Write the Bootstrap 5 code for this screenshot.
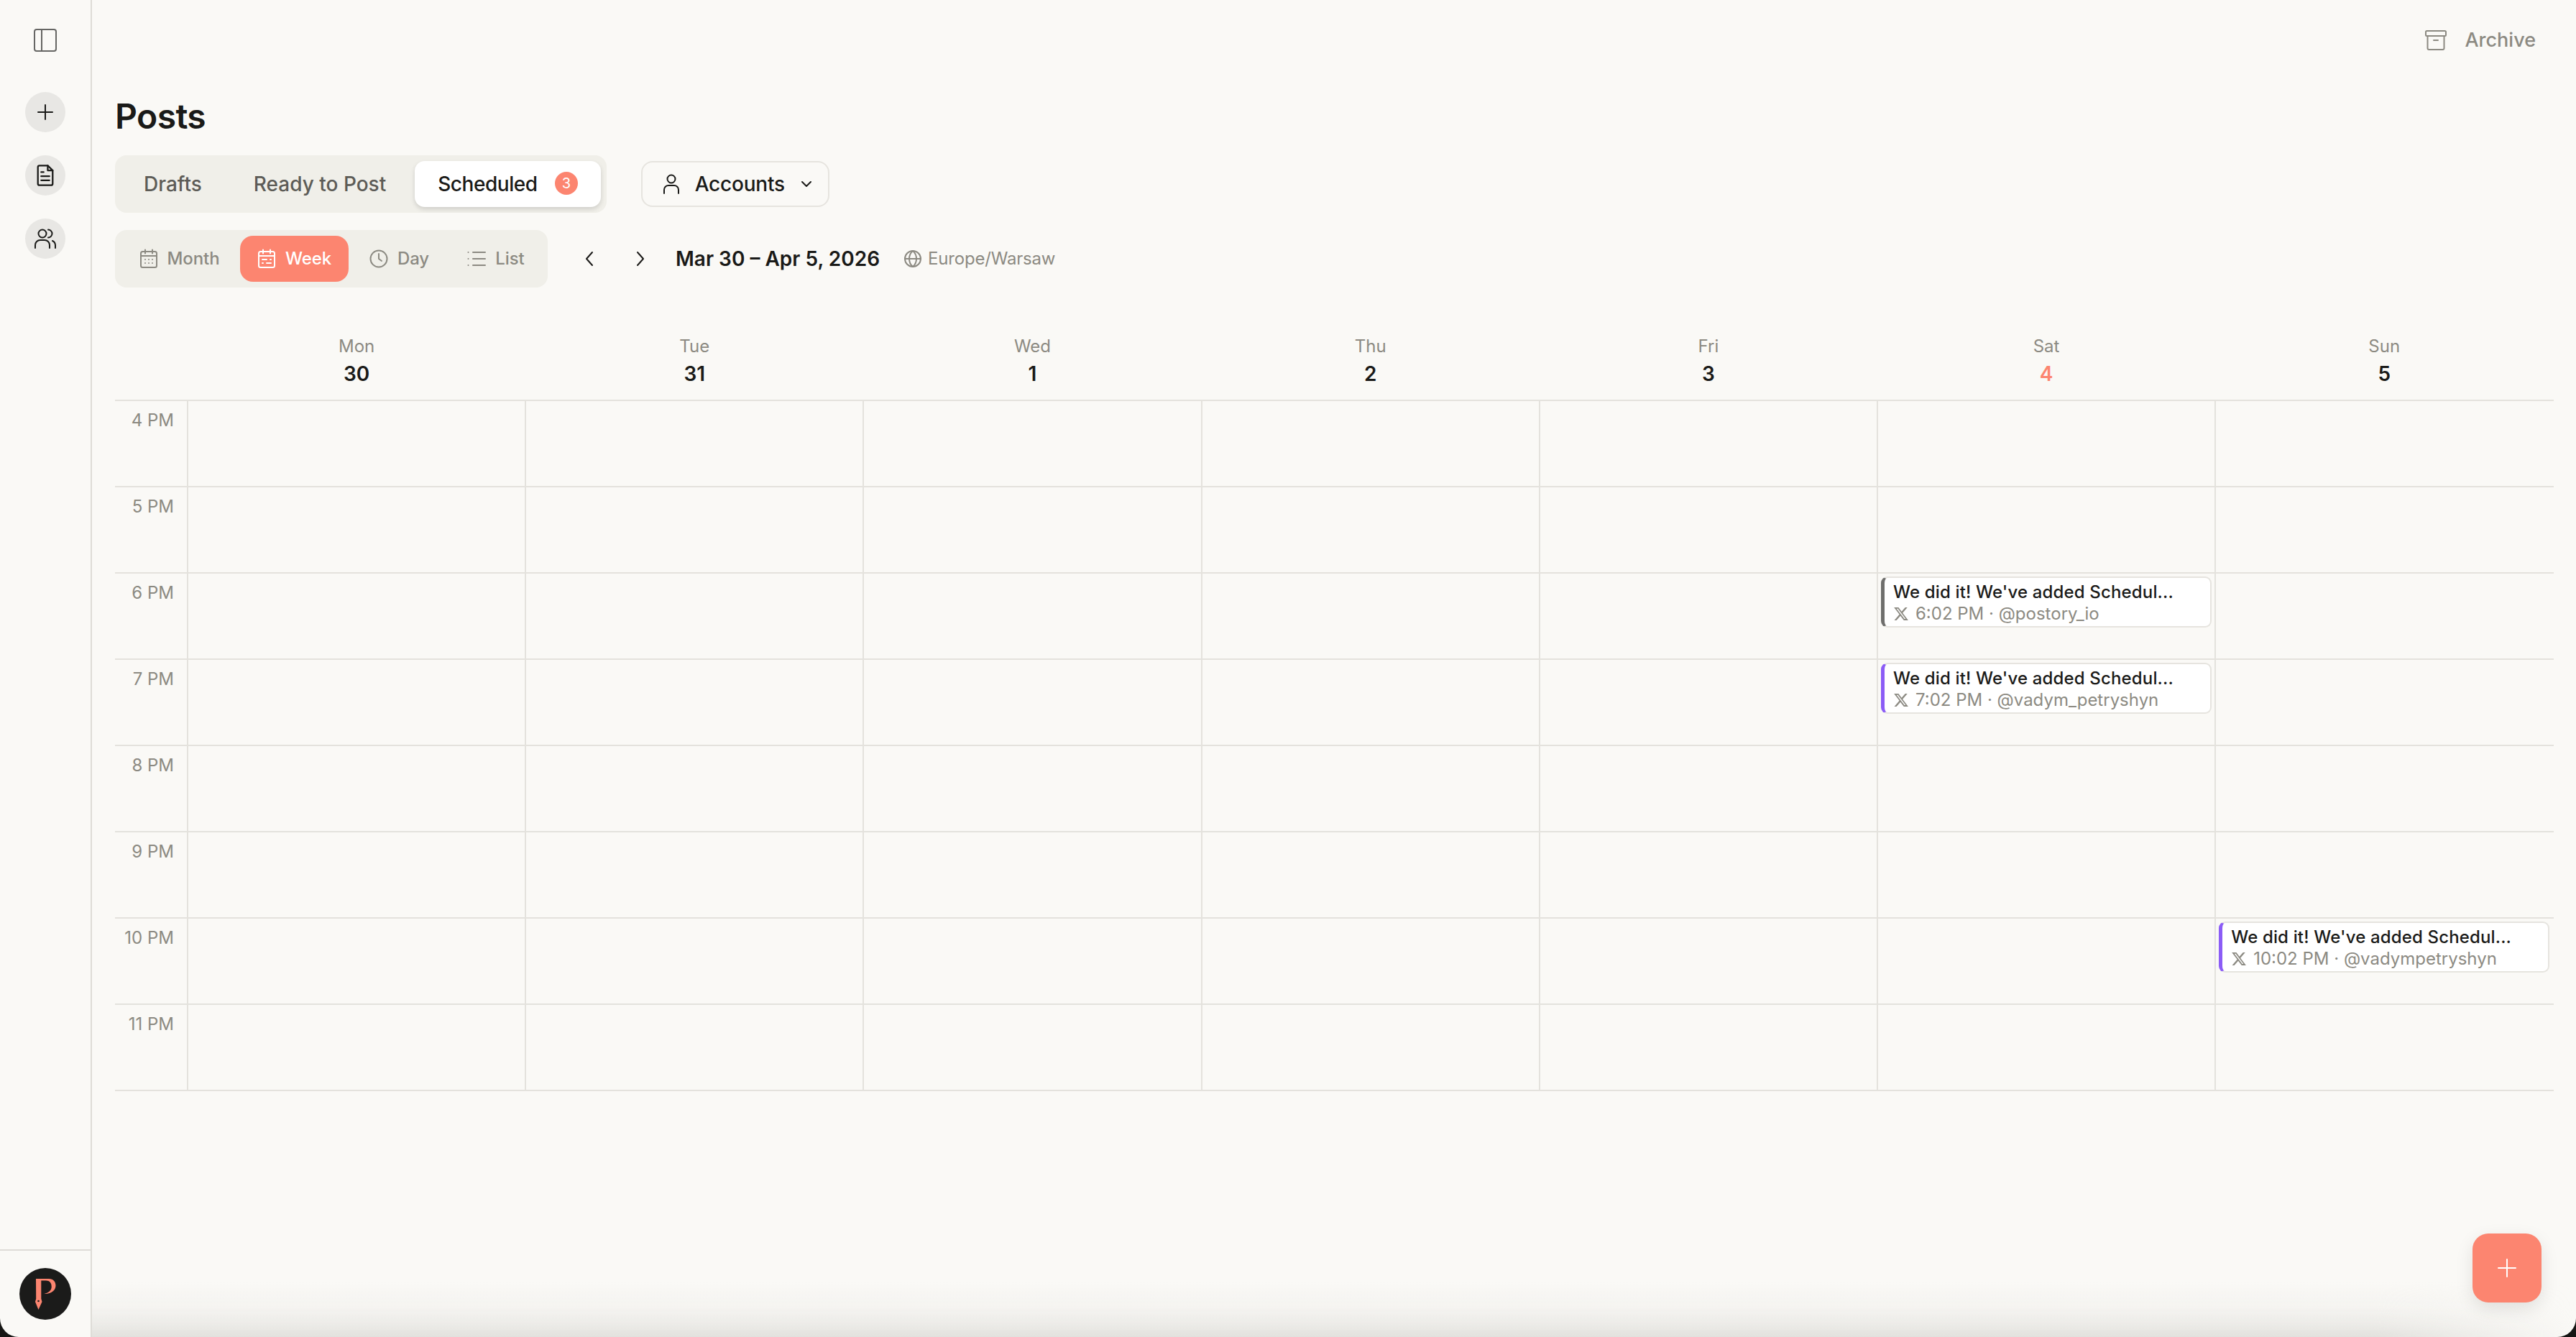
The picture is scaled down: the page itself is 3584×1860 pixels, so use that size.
<!doctype html>
<html lang="en"><head><meta charset="utf-8"><title>Posts</title>
<link href="https://cdn.jsdelivr.net/npm/bootstrap@5.3.0/dist/css/bootstrap.min.css" rel="stylesheet">
<style>
html,body{height:100%;margin:0}
body{background:#161614;font-family:Inter,"Liberation Sans",sans-serif;color:#1a1a18;overflow:hidden}
svg{display:block;flex:none}
.ic{fill:none;stroke:currentColor;stroke-width:2;stroke-linecap:round;stroke-linejoin:round}
.appwin{height:1860px;background:#faf9f6;border-radius:0 0 26px 26px;overflow:hidden;position:relative}
.siderail{width:128px;height:100%;border-right:2px solid #dedcd7;flex:none}
.railtop{padding-top:40px;gap:56px}
.railtoggle{color:#666664;height:32px}
.railbtns{gap:32px}
.railbtn{width:56px;height:56px;padding:0;border:0;background:#e8e7e4;color:#1a1a18;border-radius:50%}
.railfoot{height:122px;border-top:2px solid #dedcd7;padding-top:24px}
.mainpane{padding:0 31px 0 32px;min-width:0}
.topstrip{height:112px;padding-right:25px;color:#8c8a82;font-size:27px;font-weight:450;gap:24px}
.pagetitle{font-size:48px;font-weight:600;line-height:64px;margin:18px 0 22px;letter-spacing:-.6px}
.segbox{background:#f0efe9;border-radius:16px;padding:8px;gap:8px;height:80px}
.segtab{height:64px;border:0;border-radius:14px;background:transparent;color:#5d5c57;font-size:28px;font-weight:500;padding:0 32px;gap:24px;--bs-btn-hover-color:#5d5c57}
.segtab.sel{background:#fff;color:#1a1a18;box-shadow:0 3px 6px rgba(0,0,0,.14);letter-spacing:-.45px}
.cntpill{width:32px;height:32px;background:#fc8570;color:#fff;font-size:20px;font-weight:400;padding:0;--bs-badge-border-radius:50%}
.acctbtn{height:64px;width:262px;margin-left:48px;border:2px solid #e6e4df;border-radius:16px;font-size:28px;font-weight:500;color:#1a1a18;padding:0 0 0 28px;gap:21px;background:transparent;letter-spacing:-.2px}
.acctchev{margin-left:1px}
.viewbar{margin-top:24px}
.viewtab{height:64px;border:0;border-radius:18px;background:transparent;color:#8c8a82;font-size:24px;font-weight:500;padding:0;gap:13px;justify-content:center;letter-spacing:-.1px}
.vmonth{width:166px;padding-right:3px}.vweek{width:151px}.vday{width:141px}.vlist{width:128px}
.viewtab.sel{background:#fc8570;color:#fff}
.viewgroup{gap:0;width:602px;padding:8px}
.navchev{width:40px;height:40px;padding:0;border:0;color:#1a1a18;background:transparent}
.navs{margin-left:38px;gap:31px}
.rangetxt{font-size:28px;font-weight:600;margin-left:29px}
.tzone{color:#8c8a82;font-size:24px;margin-left:34px;gap:9px;letter-spacing:-.2px}
.calgrid{display:grid;grid-template-columns:102px repeat(7,470.2px);width:3393.4px}
.calhead{margin-top:64px;border-bottom:2px solid #e4e2dd}
.headcell{border-right:2px solid transparent;text-align:center;padding-bottom:14px}
.dayname{font-size:24px;line-height:35px;color:#8c8a82}
.daynum{font-size:28px;line-height:43px;font-weight:600}
.daynum.today{color:#fc8570}
.hourrow{height:120px;border-bottom:2px solid #e4e2dd}
.hourlabel{border-right:2px solid #e4e2dd;text-align:right;color:#8c8a82;font-size:24px;line-height:32px;padding:11px 18px 0 0}
.daycell{border-right:2px solid #e4e2dd;padding:4px 4px 0}
.daycell.lastcell{border-right:0;padding-right:6px}
.postchip{height:71px;width:460px;background:#fff;border:2px solid #e6e4df;border-left:5px solid #6f6f6d;border-radius:9px;padding:5px 0 0 12px;white-space:nowrap}
.postchip.violet{border-left-color:#8b5cf6}
.chiptitle{font-size:24px;font-weight:450;line-height:30px;color:#1a1a18;letter-spacing:.15px}
.chipmeta{font-size:24px;line-height:30px;color:#8c8a82;gap:9px}
.fabbtn{position:absolute;right:48px;bottom:48px;width:96px;height:96px;padding:0;border:0;border-radius:22px;background:#fc8570;color:#fff;box-shadow:0 8px 24px rgba(0,0,0,.1)}
.fabbtn:hover{background:#fc8570;color:#fff}
.bottomshade{position:absolute;left:128px;right:0;bottom:0;height:76px;background:linear-gradient(to top,#e2e1dd 0,rgba(226,225,221,.55) 25%,rgba(226,225,221,.2) 55%,rgba(226,225,221,0) 100%);-webkit-mask-image:linear-gradient(to right,#000 92%,transparent 100%);mask-image:linear-gradient(to right,#000 92%,transparent 100%);pointer-events:none}
</style></head>
<body>
<div class="appwin d-flex">
  <aside class="siderail d-flex flex-column justify-content-between">
    <div class="railtop d-flex flex-column align-items-center">
      <div class="railtoggle"><svg class="ic" width="32" height="32" viewBox="0 0 32 32"><rect x="1" y="1" width="30" height="30" rx="3"/><path d="M11 1v30"/></svg></div>
      <div class="railbtns d-flex flex-column">
        <button class="btn railbtn d-flex align-items-center justify-content-center" aria-label="New"><svg class="ic" width="32" height="32" viewBox="0 0 32 32"><path d="M16 6v20M6 16h20"/></svg></button>
        <button class="btn railbtn d-flex align-items-center justify-content-center" aria-label="Posts"><svg class="ic" width="28" height="32" viewBox="0 0 24 28"><path d="M15 2H5a2 2 0 0 0-2 2v20a2 2 0 0 0 2 2h14a2 2 0 0 0 2-2V8z"/><path d="M15 2v6h6M7 10h3M7 15h10M7 20h10"/></svg></button>
        <button class="btn railbtn d-flex align-items-center justify-content-center" aria-label="People"><svg class="ic" width="32" height="28" viewBox="0 0 32 28"><circle cx="12" cy="7" r="5.5"/><path d="M2 27v-4a7 7 0 0 1 7-7h6a7 7 0 0 1 7 7v4M20 1.5a5.5 5.5 0 0 1 0 11M26 17a7 7 0 0 1 4 6v4"/></svg></button>
      </div>
    </div>
    <div class="railfoot d-flex justify-content-center">
      <svg width="72" height="72" viewBox="0 0 72 72"><circle cx="36" cy="36" r="36" fill="#1b1b1a"/><path d="M23 15H41C47 15 50.500 19 50.500 24.500 50.500 31 44 36.500 34.500 36 41 34.500 44.700 31 44.700 26 44.700 20.500 42 17.500 37 17.500H30.300V42.700L31.500 47 26.500 58 22 47 23.200 42.700Z" fill="#fc8570"/><circle cx="26.500" cy="46" r="1.300" fill="#1b1b1a"/></svg>
    </div>
  </aside>
  <main class="mainpane flex-grow-1">
    <div class="topstrip d-flex align-items-center justify-content-end">
      <svg class="ic" width="32" height="30" viewBox="0 0 32 30"><rect x="2" y="2" width="28" height="7" rx="1.500"/><path d="M4.500 9v17a2 2 0 0 0 2 2h19a2 2 0 0 0 2-2V9M13 15h6"/></svg>
      <span>Archive</span>
    </div>
    <h1 class="pagetitle">Posts</h1>
    <div class="d-flex align-items-center">
      <div class="segbox d-flex">
        <button class="btn segtab d-flex align-items-center">Drafts</button>
        <button class="btn segtab d-flex align-items-center">Ready to Post</button>
        <button class="btn segtab sel d-flex align-items-center">Scheduled <span class="badge cntpill d-flex align-items-center justify-content-center">3</span></button>
      </div>
      <button class="btn acctbtn d-flex align-items-center">
        <svg class="ic" width="24" height="28" viewBox="0 0 24 28"><circle cx="12" cy="7" r="5.500"/><path d="M2 27v-5a6 6 0 0 1 6-6h8a6 6 0 0 1 6 6v5"/></svg>
        <span>Accounts</span>
        <svg class="ic acctchev" width="16" height="10" viewBox="0 0 16 10"><path d="M2 2l6 6 6-6"/></svg>
      </button>
    </div>
    <div class="viewbar d-flex align-items-center">
      <div class="segbox viewgroup d-flex">
        <button class="btn viewtab vmonth d-flex align-items-center"><svg class="ic" width="26" height="28" viewBox="0 0 26 28"><rect x="2" y="4" width="22" height="22" rx="2.500"/><path d="M8 1.500v5M18 1.500v5M2 10h22M8 15h.01M13 15h.01M18 15h.01M8 20h.01M13 20h.01M18 20h.01"/></svg>Month</button>
        <button class="btn viewtab vweek sel d-flex align-items-center"><svg class="ic" width="26" height="28" viewBox="0 0 26 28"><rect x="2" y="4" width="22" height="22" rx="2.500"/><path d="M8 1.500v5M18 1.500v5M2 10h22M7 15h6M18 15h1M7 20h1M13 20h6"/></svg>Week</button>
        <button class="btn viewtab vday d-flex align-items-center"><svg class="ic" width="26" height="26" viewBox="0 0 26 26"><circle cx="13" cy="13" r="11.500"/><path d="M13 6v7l4 3"/></svg>Day</button>
        <button class="btn viewtab vlist d-flex align-items-center"><svg class="ic" width="26" height="22" viewBox="0 0 26 22"><path d="M8 2h17M8 11h17M8 20h17M1.500 2h.01M1.500 11h.01M1.500 20h.01"/></svg>List</button>
      </div>
      <div class="navs d-flex">
        <button class="btn navchev d-flex align-items-center justify-content-center" aria-label="Previous"><svg class="ic" width="14" height="22" viewBox="0 0 14 22"><path d="M11 2l-8 9 8 9"/></svg></button>
        <button class="btn navchev d-flex align-items-center justify-content-center" aria-label="Next"><svg class="ic" width="14" height="22" viewBox="0 0 14 22"><path d="M3 2l8 9-8 9"/></svg></button>
      </div>
      <div class="rangetxt">Mar 30 – Apr 5, 2026</div>
      <div class="tzone d-flex align-items-center"><svg class="ic" width="24" height="24" viewBox="0 0 24 24"><circle cx="12" cy="12" r="11"/><path d="M1 12h22M12 1c3.500 3 5 7 5 11s-1.500 8-5 11c-3.500-3-5-7-5-11s1.500-8 5-11z"/></svg>Europe/Warsaw</div>
    </div>
    <div class="calgrid calhead">
      <div class="headcell"></div>
      <div class="headcell"><div class="dayname">Mon</div><div class="daynum">30</div></div>
      <div class="headcell"><div class="dayname">Tue</div><div class="daynum">31</div></div>
      <div class="headcell"><div class="dayname">Wed</div><div class="daynum">1</div></div>
      <div class="headcell"><div class="dayname">Thu</div><div class="daynum">2</div></div>
      <div class="headcell"><div class="dayname">Fri</div><div class="daynum">3</div></div>
      <div class="headcell"><div class="dayname">Sat</div><div class="daynum today">4</div></div>
      <div class="headcell"><div class="dayname">Sun</div><div class="daynum">5</div></div>
    </div>
    <div class="calgrid hourrow"><div class="hourlabel">4 PM</div><div class="daycell"></div><div class="daycell"></div><div class="daycell"></div><div class="daycell"></div><div class="daycell"></div><div class="daycell"></div><div class="daycell lastcell"></div></div>
    <div class="calgrid hourrow"><div class="hourlabel">5 PM</div><div class="daycell"></div><div class="daycell"></div><div class="daycell"></div><div class="daycell"></div><div class="daycell"></div><div class="daycell"></div><div class="daycell lastcell"></div></div>
    <div class="calgrid hourrow"><div class="hourlabel">6 PM</div><div class="daycell"></div><div class="daycell"></div><div class="daycell"></div><div class="daycell"></div><div class="daycell"></div>
      <div class="daycell"><div class="postchip"><div class="chiptitle">We did it! We've added Schedul...</div><div class="chipmeta d-flex align-items-center"><svg width="22" height="22" viewBox="0 0 24 24" fill="currentColor"><path d="M18.244 2.250h3.308l-7.227 8.260 8.502 11.240H16.170l-5.214-6.817L4.990 21.750H1.680l7.730-8.835L1.254 2.250H8.080l4.713 6.231zm-1.161 17.520h1.833L7.084 4.126H5.117z"/></svg><span>6:02 PM · @postory_io</span></div></div></div>
      <div class="daycell lastcell"></div></div>
    <div class="calgrid hourrow"><div class="hourlabel">7 PM</div><div class="daycell"></div><div class="daycell"></div><div class="daycell"></div><div class="daycell"></div><div class="daycell"></div>
      <div class="daycell"><div class="postchip violet"><div class="chiptitle">We did it! We've added Schedul...</div><div class="chipmeta d-flex align-items-center"><svg width="22" height="22" viewBox="0 0 24 24" fill="currentColor"><path d="M18.244 2.250h3.308l-7.227 8.260 8.502 11.240H16.170l-5.214-6.817L4.990 21.750H1.680l7.730-8.835L1.254 2.250H8.080l4.713 6.231zm-1.161 17.520h1.833L7.084 4.126H5.117z"/></svg><span>7:02 PM · @vadym_petryshyn</span></div></div></div>
      <div class="daycell lastcell"></div></div>
    <div class="calgrid hourrow"><div class="hourlabel">8 PM</div><div class="daycell"></div><div class="daycell"></div><div class="daycell"></div><div class="daycell"></div><div class="daycell"></div><div class="daycell"></div><div class="daycell lastcell"></div></div>
    <div class="calgrid hourrow"><div class="hourlabel">9 PM</div><div class="daycell"></div><div class="daycell"></div><div class="daycell"></div><div class="daycell"></div><div class="daycell"></div><div class="daycell"></div><div class="daycell lastcell"></div></div>
    <div class="calgrid hourrow"><div class="hourlabel">10 PM</div><div class="daycell"></div><div class="daycell"></div><div class="daycell"></div><div class="daycell"></div><div class="daycell"></div><div class="daycell"></div>
      <div class="daycell lastcell"><div class="postchip violet"><div class="chiptitle">We did it! We've added Schedul...</div><div class="chipmeta d-flex align-items-center"><svg width="22" height="22" viewBox="0 0 24 24" fill="currentColor"><path d="M18.244 2.250h3.308l-7.227 8.260 8.502 11.240H16.170l-5.214-6.817L4.990 21.750H1.680l7.730-8.835L1.254 2.250H8.080l4.713 6.231zm-1.161 17.520h1.833L7.084 4.126H5.117z"/></svg><span>10:02 PM · @vadympetryshyn</span></div></div></div></div>
    <div class="calgrid hourrow"><div class="hourlabel">11 PM</div><div class="daycell"></div><div class="daycell"></div><div class="daycell"></div><div class="daycell"></div><div class="daycell"></div><div class="daycell"></div><div class="daycell lastcell"></div></div>
  </main>
  <div class="bottomshade"></div>
  <button class="btn fabbtn d-flex align-items-center justify-content-center" aria-label="Create"><svg class="ic" width="28" height="28" viewBox="0 0 28 28" stroke-width="3"><path d="M14 2v24M2 14h24"/></svg></button>
</div>
<script src="https://cdn.jsdelivr.net/npm/bootstrap@5.3.0/dist/js/bootstrap.bundle.min.js"></script>
</body></html>
